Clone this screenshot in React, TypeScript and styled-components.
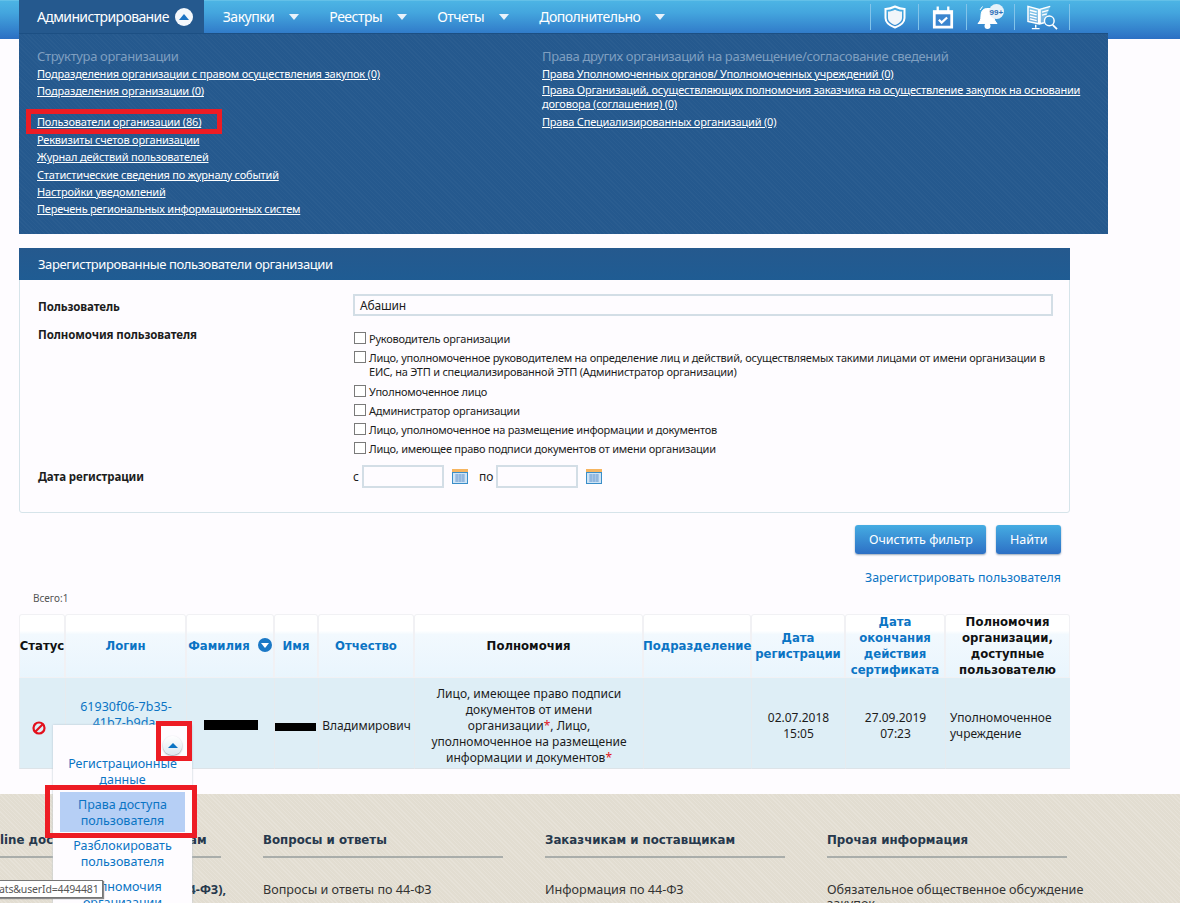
import styled, { createGlobalStyle } from 'styled-components'

const GlobalStyle = createGlobalStyle`
  html, body {
    margin: 0;
    height: 903px;
    overflow: hidden;
    background: #fefcff;
  }
  body {
    font-family: 'Noto Sans', 'Liberation Sans', sans-serif;
    font-size: 12px;
    color: #1c1c1c;
  }
`

const Page = styled.div`
  width: 1180px;
  height: 903px;
  position: relative;
  overflow: hidden;
`

const Nav = styled.div`
  height: 39px;
  display: flex;
  padding-left: 19px;
  background: linear-gradient(#4cb4e4 0, #44a6de 30%, #2b6fc3 100%);
  border-top: 1px solid #63c0e8;
  box-sizing: border-box;
`

const NavItem = styled.div<{ $active?: boolean }>`
  height: 33px;
  margin-top: -1px;
  padding: 0 11px 0 ${(p) => (p.$active ? '18px' : '19px')};
  display: flex;
  align-items: center;
  color: #fff;
  font-size: 14px;
  letter-spacing: ${(p) => (p.$active ? '-0.62px' : '-0.5px')};
  white-space: nowrap;
  background: ${(p) => (p.$active ? '#25598e' : 'transparent')};
`

const Caret = styled.span`
  width: 0;
  height: 0;
  border-left: 5px solid transparent;
  border-right: 5px solid transparent;
  border-top: 6px solid #e8f2fb;
  margin-left: 15px;
`

const CaretCircle = styled.span`
  width: 18px;
  height: 18px;
  margin-left: 6px;
  border-radius: 50%;
  background: #f4f8fc;
  display: flex;
  align-items: center;
  justify-content: center;
  &::after {
    content: '';
    border-left: 5px solid transparent;
    border-right: 5px solid transparent;
    border-bottom: 6px solid #1c74c4;
  }
`

const NavTools = styled.div`
  display: flex;
  margin-left: auto;
  margin-right: 110px;
  height: 26px;
  margin-top: 3px;
  border-right: 1px solid #83c4ea;
`

const Tool = styled.div<{ $wide?: boolean }>`
  width: ${(p) => (p.$wide ? '54px' : '47px')};
  border-left: 1px solid #83c4ea;
  display: flex;
  align-items: center;
  justify-content: center;
`

const MegaMenu = styled.div`
  position: relative;
  margin: -6px 0 0 19px;
  width: 1089px;
  height: 201px;
  box-sizing: border-box;
  padding: 14px 24px 0 18px;
  background-color: #25598e;
  background-image: repeating-linear-gradient(45deg, rgba(255, 255, 255, 0.025) 0 1px, transparent 1px 3px);
  display: grid;
  grid-template-columns: 505px 1fr;
  border-top: 1px solid #1c4f83;
`

const MenuColumn = styled.div`
  display: flex;
  flex-direction: column;
`

const MenuTitle = styled.div`
  color: #7f9fc0;
  font-size: 13px;
  line-height: 16px;
  letter-spacing: -0.35px;
  margin-bottom: 3px;
`

const MenuLink = styled.a<{ $gap?: number }>`
  color: #fff;
  font-size: 11px;
  line-height: 14px;
  letter-spacing: -0.2px;
  text-decoration: underline;
  margin-bottom: ${(p) => p.$gap ?? 3.4}px;
`

const Card = styled.div`
  margin: 14px 0 0 19px;
  width: 1051px;
  height: 265px;
  box-sizing: border-box;
  border: 1px solid #d6e4ea;
  border-radius: 3px;
`

const CardHead = styled.div`
  height: 32px;
  margin: -1px;
  padding-left: 19px;
  display: flex;
  align-items: center;
  color: #fff;
  font-size: 13px;
  letter-spacing: -0.4px;
  background: linear-gradient(#25598e, #1f5c93);
`

const FilterGrid = styled.div`
  display: grid;
  grid-template-columns: 315px 700px;
  padding: 15px 0 0 18px;
  row-gap: 5px;
`

const FieldLabel = styled.div<{ $top?: number }>`
  font-weight: 700;
  font-size: 11.5px;
  letter-spacing: -0.1px;
  line-height: 16px;
  padding-top: ${(p) => p.$top ?? 5}px;
`

const TextInput = styled.div`
  height: 22px;
  box-sizing: border-box;
  border: 2px solid #d3dee6;
  padding-left: 5px;
  font-size: 12px;
  letter-spacing: -0.2px;
  line-height: 20px;
`

const CheckList = styled.div`
  display: flex;
  flex-direction: column;
  gap: 5.3px;
  padding-top: 11px;
  font-size: 11px;
  line-height: 14px;
  letter-spacing: -0.23px;
`

const CheckRow = styled.div`
  position: relative;
  padding-left: 16px;
  padding-right: 4px;
  &::before {
    content: '';
    position: absolute;
    left: 1px;
    top: 0;
    width: 10px;
    height: 10px;
    border: 1px solid #7a7a7a;
    background: #fff;
  }
`

const DateRow = styled.div`
  display: flex;
  align-items: center;
  font-size: 12px;
  margin-top: 4px;
`

const DateInput = styled.div`
  width: 82px;
  height: 23px;
  box-sizing: border-box;
  border: 2px solid #d3dee6;
  margin-left: 3px;
  margin-right: 8px;
`

const DateLabel = styled.span`
  margin-left: 11px;
`

const Actions = styled.div`
  width: 1061px;
  margin-top: 12px;
  display: flex;
  justify-content: flex-end;
  gap: 10px;
`

const Button = styled.div`
  height: 29px;
  padding: 0 13.5px;
  display: flex;
  align-items: center;
  color: #fff;
  font-size: 12.5px;
  border-radius: 3px;
  background: linear-gradient(#45ace2, #2d70c5);
  box-shadow: 0 1px 2px #9aa9b8;
`

const RegisterLink = styled.a`
  display: block;
  width: 1061px;
  margin-top: 15px;
  text-align: right;
  color: #0b74c4;
  font-size: 12.4px;
  line-height: 18px;
`

const Total = styled.div`
  margin: 4px 0 0 33px;
  font-size: 10px;
  line-height: 14px;
  color: #555;
`

const Table = styled.table`
  margin: 9px 0 0 19px;
  width: 1051px;
  table-layout: fixed;
  border-collapse: separate;
  border-spacing: 0;
`

const Th = styled.th<{ $w: number; $plain?: boolean }>`
  width: ${(p) => p.$w}px;
  height: 64px;
  box-sizing: border-box;
  padding: 0;
  font-family: 'DejaVu Sans', sans-serif;
  font-size: 11.7px;
  line-height: 16px;
  font-weight: 700;
  white-space: pre-line;
  color: ${(p) => (p.$plain ? '#111' : '#0b74c4')};
  border-radius: 3px 3px 0 0;
  box-shadow: inset 0 0 0 1px #f1f1f4;
  background: linear-gradient(#fff 0, #fff 26%, #f2f9fe 32%, #e9f5fd 100%);
`

const SortDot = styled.span`
  display: inline-block;
  width: 14px;
  height: 14px;
  border-radius: 50%;
  background: #1a78c6;
  vertical-align: -2px;
  margin-left: 8px;
  position: relative;
  &::after {
    content: '';
    position: absolute;
    left: 3px;
    top: 5px;
    border-left: 4px solid transparent;
    border-right: 4px solid transparent;
    border-top: 5px solid #fff;
  }
`

const Td = styled.td<{ $left?: boolean; $pad?: number }>`
  padding: 5px ${(p) => p.$pad ?? 4}px 0;
  background: #deeef6;
  border-left: 1px solid #e6ebef;
  border-bottom: 1px solid #dde3e8;
  font-size: 12px;
  line-height: 16px;
  text-align: ${(p) => (p.$left ? 'left' : 'center')};
  vertical-align: middle;
  overflow: hidden;
`

const LoginCell = styled.div`
  color: #0b74c4;
  font-size: 12.5px;
  height: 85px;
  padding-top: 16px;
  box-sizing: border-box;
`

const BanWrap = styled.div`
  padding: 8px 0 0 8px;
`

const Star = styled.span`
  color: #e0141c;
`

const Redacted = styled.span<{ $w: number; $top?: number }>`
  display: inline-block;
  width: ${(p) => p.$w}px;
  height: ${(p) => 10 - (p.$top ?? 0) / 3}px;
  margin-top: ${(p) => p.$top ?? 0}px;
  background: #000;
`

const Footer = styled.div`
  margin-top: 25px;
  height: 120px;
  box-sizing: border-box;
  padding-top: 38px;
  background-color: #e2ddd1;
  background-image: repeating-linear-gradient(45deg, rgba(255, 255, 255, 0.16) 0 1px, transparent 1px 3px);
  display: grid;
  grid-template-columns: 221px 240px 240px 290px;
  column-gap: 42px;
`

const FooterCol = styled.div`
  color: #333;
`

const FooterTitle = styled.div`
  max-width: 240px;
  font-family: 'DejaVu Sans', sans-serif;
  font-weight: 700;
  font-size: 11.8px;
  line-height: 17px;
  color: #26384c;
  padding-bottom: 7px;
  border-bottom: 2px solid #a9adaa;
  margin-bottom: 25px;
  white-space: nowrap;
  overflow: hidden;
`

const FooterText = styled.div`
  width: 262px;
  font-size: 12.6px;
  line-height: 14px;
`

const FooterStrong = styled.div`
  width: 226px;
  font-size: 12.6px;
  line-height: 14px;
  font-weight: 700;
  text-align: right;
  white-space: nowrap;
  color: #26384c;
`

const RowMenu = styled.div`
  position: absolute;
  left: 53px;
  top: 725px;
  width: 139px;
  height: 190px;
  background: #fefcff;
  box-shadow: 0 0 2px #b9c4cc;
  padding-top: 26px;
  box-sizing: border-box;
  display: flex;
  flex-direction: column;
  align-items: center;
  z-index: 2;
`

const RowToggle = styled.div`
  position: absolute;
  left: 163px;
  top: 736px;
  width: 19px;
  height: 19px;
  border-radius: 50%;
  background: linear-gradient(#fff, #dde8f0);
  box-shadow: 0 1px 2px #8b9aa6;
  display: flex;
  align-items: center;
  justify-content: center;
  z-index: 3;
  &::after {
    content: '';
    border-left: 5px solid transparent;
    border-right: 5px solid transparent;
    border-bottom: 5px solid #0b74c4;
  }
`

const RowMenuItem = styled.div<{ $on?: boolean }>`
  width: 125px;
  height: 40px;
  box-sizing: border-box;
  padding-top: 2px;
  display: flex;
  align-items: center;
  justify-content: center;
  text-align: center;
  margin-bottom: 1px;
  font-size: 12.5px;
  line-height: 16px;
  color: #0b74c4;
  background: ${(p) => (p.$on ? '#b6cff5' : 'transparent')};
`

const Marker = styled.div<{ $x: number; $y: number; $w: number; $h: number }>`
  position: absolute;
  left: ${(p) => p.$x}px;
  top: ${(p) => p.$y}px;
  width: ${(p) => p.$w}px;
  height: ${(p) => p.$h}px;
  box-sizing: border-box;
  border: 5px solid #ed1c24;
  z-index: 4;
`

const UrlTip = styled.div`
  position: absolute;
  left: -2px;
  top: 880px;
  width: 105px;
  height: 18px;
  box-sizing: border-box;
  background: #fff;
  border: 1px solid #767676;
  box-shadow: 1px 1px 1px #888;
  font-size: 10.5px;
  line-height: 16px;
  letter-spacing: -0.15px;
  color: #555;
  text-align: right;
  padding-right: 7px;
  z-index: 5;
  overflow: hidden;
  white-space: nowrap;
`

const ShieldIcon = () => (
  <svg width="22" height="24" viewBox="0 0 22 24" fill="none">
    <path d="M1.500 4C5 4 8 3 11 1.500 14 3 17 4 20.500 4v9c0 4.500-4 7.500-9.500 9.500C5.500 20.500 1.500 17.500 1.500 13Z" stroke="#fff" strokeWidth="2" />
    <path d="M4 6.500c2.500 0 5-.7 7-1.800 2 1.100 4.500 1.800 7 1.800V13c0 3-3 5.500-7 7-4-1.500-7-4-7-7Z" fill="#f2f6fa" />
  </svg>
)

const CalendarIcon = () => (
  <svg width="22" height="25" viewBox="0 0 24 26">
    <path d="M1 5h22v20H1Z" fill="#fff" />
    <path d="M5 1h2.500v6H5ZM16.500 1H19v6h-2.500Z" fill="#fff" />
    <path d="M4 9.500h16V22H4Z" fill="#3b86cf" />
    <path d="m7.500 15.500 3 3 6-5.500" stroke="#fff" strokeWidth="2.500" fill="none" />
  </svg>
)

const BellIcon = () => (
  <svg width="28" height="26" viewBox="0 0 28 26">
    <path d="M3 6 5.500 2.500M9.500 4.500C5.500 5 4 8 4 12c0 3.500-1 5.500-3 7.500h19c-2-2-3-4-3-7.500 0-3-1-6-4-7.500Z" fill="#fff" stroke="#fff" />
    <circle cx="10.500" cy="22" r="3" fill="#fff" />
    <circle cx="19.500" cy="7.500" r="7.500" fill="#e8f1f9" />
    <text x="12.500" y="10.500" fontSize="8" fontWeight="700" fill="#2d6fb8" fontFamily="Liberation Sans">99+</text>
  </svg>
)

const BookIcon = () => (
  <svg width="31" height="27" viewBox="0 0 32 27" fill="none" stroke="#fff">
    <path d="M1 2 12 5v15L1 17.500ZM24 2 13.500 5v15l4-1" strokeWidth="1.500" fill="#fff" fillOpacity="0.3" />
    <path d="M3 6l7 1.800M3 9l7 1.800M3 12l7 1.800M3 15l7 1.800M15.500 8l6.500-1.800M15.500 11l5-1.300" strokeWidth="1.400" />
    <path d="M9 21v3M5 25h8" strokeWidth="1.500" />
    <circle cx="23" cy="17" r="5" strokeWidth="1.500" />
    <path d="m26.500 21 4.500 4.500" strokeWidth="1.800" />
  </svg>
)

const CalIcon = () => (
  <svg width="16" height="15" viewBox="0 0 16 15" style={{ flex: 'none' }}>
    <rect width="16" height="15" fill="#3a8ec8" />
    <rect width="16" height="3" fill="#f6b560" />
    <rect x="1" y="4" width="14" height="10" fill="#cfe4f5" />
    <path d="M3 6h10M3 8h10M3 10h10M3 12h10M5 5v8M8 5v8M11 5v8" stroke="#7fa9d8" strokeWidth="1" />
  </svg>
)

const BanIcon = () => (
  <svg width="14" height="14" viewBox="0 0 14 14" fill="none" stroke="#e3101c" strokeWidth="2.200">
    <circle cx="7" cy="7" r="5.500" />
    <path d="m3 11 8-8" />
  </svg>
)

const columns = [
  { w: 46, label: 'Статус', plain: true },
  { w: 121, label: 'Логин' },
  { w: 88, label: 'Фамилия', sort: true },
  { w: 44, label: 'Имя' },
  { w: 96, label: 'Отчество' },
  { w: 229, label: 'Полномочия', plain: true },
  { w: 108, label: 'Подразделение' },
  { w: 94, label: 'Дата\nрегистрации' },
  { w: 100, label: 'Дата\nокончания\nдействия\nсертификата' },
  { w: 125, label: 'Полномочия\nорганизации,\nдоступные\nпользователю', plain: true },
]

const checks = [
  'Руководитель организации',
  'Лицо, уполномоченное руководителем на определение лиц и действий, осуществляемых такими лицами от имени организации в ЕИС, на ЭТП и специализированной ЭТП (Администратор организации)',
  'Уполномоченное лицо',
  'Администратор организации',
  'Лицо, уполномоченное на размещение информации и документов',
  'Лицо, имеющее право подписи документов от имени организации',
]

const App = () => {
  return (
    <Page>
      <GlobalStyle />
      <Nav>
        <NavItem $active>
          Администрирование
          <CaretCircle />
        </NavItem>
        <NavItem>Закупки<Caret /></NavItem>
        <NavItem>Реестры<Caret /></NavItem>
        <NavItem>Отчеты<Caret /></NavItem>
        <NavItem>Дополнительно<Caret /></NavItem>
        <NavTools>
          <Tool><ShieldIcon /></Tool>
          <Tool><CalendarIcon /></Tool>
          <Tool><BellIcon /></Tool>
          <Tool $wide><BookIcon /></Tool>
        </NavTools>
      </Nav>
      <MegaMenu>
        <MenuColumn>
          <MenuTitle>Структура организации</MenuTitle>
          <MenuLink>Подразделения организации с правом осуществления закупок (0)</MenuLink>
          <MenuLink $gap={17}>Подразделения организации (0)</MenuLink>
          <MenuLink>Пользователи организации (86)</MenuLink>
          <MenuLink>Реквизиты счетов организации</MenuLink>
          <MenuLink>Журнал действий пользователей</MenuLink>
          <MenuLink>Статистические сведения по журналу событий</MenuLink>
          <MenuLink>Настройки уведомлений</MenuLink>
          <MenuLink>Перечень региональных информационных систем</MenuLink>
        </MenuColumn>
        <MenuColumn>
          <MenuTitle>Права других организаций на размещение/согласование сведений</MenuTitle>
          <MenuLink $gap={2}>Права Уполномоченных органов/ Уполномоченных учреждений (0)</MenuLink>
          <MenuLink $gap={4}>
            Права Организаций, осуществляющих полномочия заказчика на осуществление закупок на основании договора (соглашения) (0)
          </MenuLink>
          <MenuLink>Права Специализированных организаций (0)</MenuLink>
        </MenuColumn>
      </MegaMenu>

      <Card>
        <CardHead>Зарегистрированные пользователи организации</CardHead>
        <FilterGrid>
          <FieldLabel>Пользователь</FieldLabel>
          <TextInput>Абашин</TextInput>
          <FieldLabel $top={6}>Полномочия пользователя</FieldLabel>
          <CheckList>
            {checks.map((c) => (
              <CheckRow key={c}>{c}</CheckRow>
            ))}
          </CheckList>
          <FieldLabel $top={8}>Дата регистрации</FieldLabel>
          <DateRow>
            с
            <DateInput />
            <CalIcon />
            <DateLabel>по</DateLabel>
            <DateInput />
            <CalIcon />
          </DateRow>
        </FilterGrid>
      </Card>

      <Actions>
        <Button>Очистить фильтр</Button>
        <Button>Найти</Button>
      </Actions>
      <RegisterLink>Зарегистрировать пользователя</RegisterLink>
      <Total>Всего:1</Total>

      <Table>
        <thead>
          <tr>
            {columns.map((c) => (
              <Th key={c.label} $w={c.w} $plain={c.plain}>
                {c.label}
                {c.sort && <SortDot />}
              </Th>
            ))}
          </tr>
        </thead>
        <tbody>
          <tr>
            <Td $left><BanWrap><BanIcon /></BanWrap></Td>
            <Td><LoginCell>61930f06-7b35-41b7-b9da-</LoginCell></Td>
            <Td><Redacted $w={54} /></Td>
            <Td $left $pad={0}><Redacted $w={41} $top={6} /></Td>
            <Td $pad={2}>Владимирович</Td>
            <Td $pad={10}>
              Лицо, имеющее право подписи документов от имени организации<Star>*</Star>, Лицо, уполномоченное на размещение информации и документов<Star>*</Star>
            </Td>
            <Td />
            <Td>02.07.2018 15:05</Td>
            <Td>27.09.2019 07:23</Td>
            <Td $left>Уполномоченное учреждение</Td>
          </tr>
        </tbody>
      </Table>

      <Footer>
        <FooterCol>
          <FooterTitle>line доступ к нашим сервисам</FooterTitle>
          <FooterStrong>Закупки (44-ФЗ),</FooterStrong>
        </FooterCol>
        <FooterCol>
          <FooterTitle>Вопросы и ответы</FooterTitle>
          <FooterText>Вопросы и ответы по 44-ФЗ</FooterText>
        </FooterCol>
        <FooterCol>
          <FooterTitle>Заказчикам и поставщикам</FooterTitle>
          <FooterText>Информация по 44-ФЗ</FooterText>
        </FooterCol>
        <FooterCol>
          <FooterTitle>Прочая информация</FooterTitle>
          <FooterText>Обязательное общественное обсуждение закупок</FooterText>
        </FooterCol>
      </Footer>

      <RowMenu>
        <RowMenuItem>Регистрационные данные</RowMenuItem>
        <RowMenuItem $on>Права доступа пользователя</RowMenuItem>
        <RowMenuItem>Разблокировать пользователя</RowMenuItem>
        <RowMenuItem>Полномочия организации</RowMenuItem>
      </RowMenu>
      <RowToggle />
      <Marker $x={26} $y={109} $w={196} $h={25} />
      <Marker $x={156} $y={721} $w={36} $h={40} />
      <Marker $x={45} $y={785} $w={152} $h={53} />
      <UrlTip>ats&amp;userId=4494481</UrlTip>
    </Page>
  )
}

export default App
